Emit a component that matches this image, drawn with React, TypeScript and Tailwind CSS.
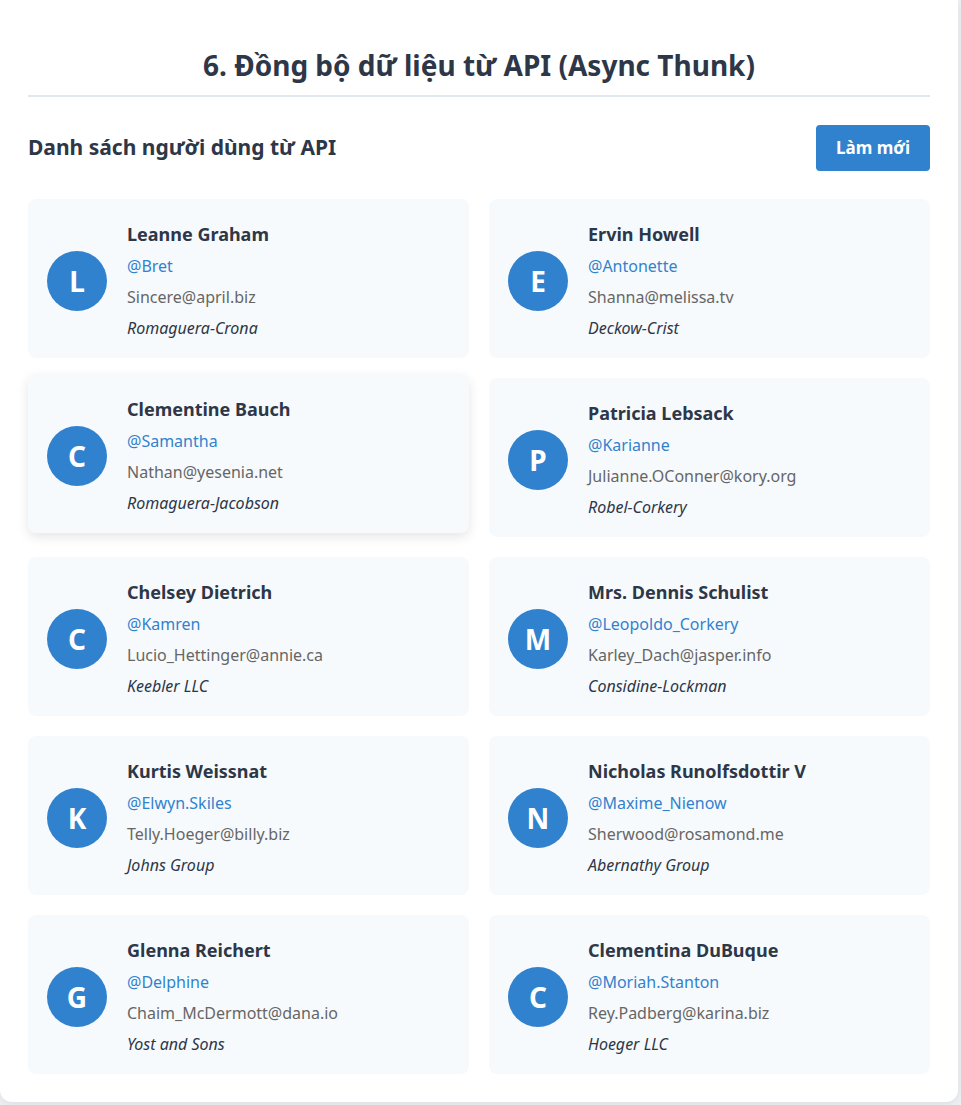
const users = [
  { name: 'Leanne Graham', username: 'Bret', email: 'Sincere@april.biz', company: 'Romaguera-Crona' },
  { name: 'Ervin Howell', username: 'Antonette', email: 'Shanna@melissa.tv', company: 'Deckow-Crist' },
  { name: 'Clementine Bauch', username: 'Samantha', email: 'Nathan@yesenia.net', company: 'Romaguera-Jacobson' },
  { name: 'Patricia Lebsack', username: 'Karianne', email: 'Julianne.OConner@kory.org', company: 'Robel-Corkery' },
  { name: 'Chelsey Dietrich', username: 'Kamren', email: 'Lucio_Hettinger@annie.ca', company: 'Keebler LLC' },
  { name: 'Mrs. Dennis Schulist', username: 'Leopoldo_Corkery', email: 'Karley_Dach@jasper.info', company: 'Considine-Lockman' },
  { name: 'Kurtis Weissnat', username: 'Elwyn.Skiles', email: 'Telly.Hoeger@billy.biz', company: 'Johns Group' },
  { name: 'Nicholas Runolfsdottir V', username: 'Maxime_Nienow', email: 'Sherwood@rosamond.me', company: 'Abernathy Group' },
  { name: 'Glenna Reichert', username: 'Delphine', email: 'Chaim_McDermott@dana.io', company: 'Yost and Sons' },
  { name: 'Clementina DuBuque', username: 'Moriah.Stanton', email: 'Rey.Padberg@karina.biz', company: 'Hoeger LLC' },
]

function UserCard({ user, hovered }: { user: (typeof users)[number]; hovered?: boolean }) {
  return (
    <div
      className={
        hovered
          ? 'flex items-center gap-5 rounded-lg bg-[#f7fafc] px-[19px] pt-[22px] pb-[18px] -translate-y-1 shadow-[0_4px_12px_rgba(0,0,0,0.1)]'
          : 'flex items-center gap-5 rounded-lg bg-[#f7fafc] px-[19px] pt-[22px] pb-[18px]'
      }
    >
      <div className="flex h-[60px] w-[60px] shrink-0 items-center justify-center rounded-full bg-[#3182ce] text-[28px] font-bold text-white">
        {user.name.replace('Mrs. ', 'M')[0]}
      </div>
      <div className="flex flex-col">
        <h3 className="mb-[7px] text-[18px] leading-[26px] font-bold text-[#2d3748]">{user.name}</h3>
        <p className="text-base leading-6 text-[#3182ce]">@{user.username}</p>
        <p className="mt-[7px] text-base leading-6 text-[#666666]">{user.email}</p>
        <p className="mt-[7px] text-base leading-6 italic text-[#2d3748]">{user.company}</p>
      </div>
    </div>
  )
}

export default function App() {
  return (
    <div className="min-h-[1105px] bg-[#eef0f3] font-['Segoe_UI','Noto_Sans',sans-serif]">
      <div className="w-[958px] rounded-b-xl bg-white px-7 pt-12 pb-7 shadow-[0_2px_10px_rgba(0,0,0,0.08)]">
        <h2 className="border-b-2 border-[#e2e8f0] pb-[13px] text-center text-[28px] leading-[34px] font-bold text-[#2d3748]">
          6. Đồng bộ dữ liệu từ API (Async Thunk)
        </h2>
        <div className="mt-7 flex items-center justify-between">
          <h3 className="text-[21px] font-bold text-[#2d3748]">Danh sách người dùng từ API</h3>
          <button className="h-[46px] rounded bg-[#3182ce] px-5 text-[17px] font-bold text-white">Làm mới</button>
        </div>
        <div className="mt-7 grid grid-cols-2 gap-5">
          {users.map((u, i) => (
            <UserCard key={u.username} user={u} hovered={i === 2} />
          ))}
        </div>
      </div>
    </div>
  )
}
